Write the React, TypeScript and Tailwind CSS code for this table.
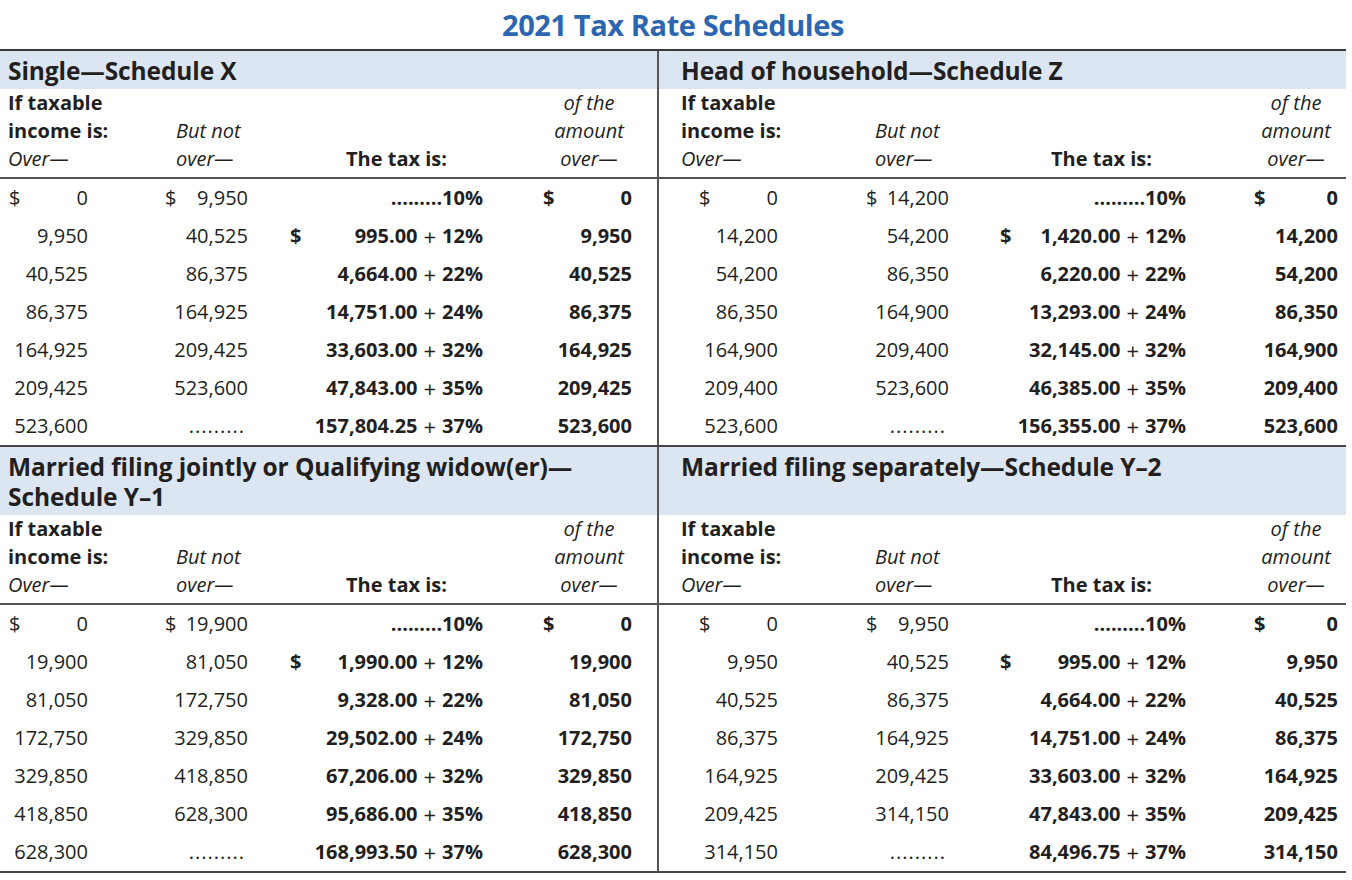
import { FC, ReactNode } from 'react';

type Row = {
  over: string;
  notOver: string | null;
  base: string | null;
  rate: string;
  amountOver: string;
};

type Schedule = {
  title: ReactNode;
  rows: Row[];
};

const mk = (data: [string, string | null, string | null, string, string][]): Row[] =>
  data.map(([over, notOver, base, rate, amountOver]) => ({ over, notOver, base, rate, amountOver }));

const single: Schedule = {
  title: 'Single—Schedule X',
  rows: mk([
    ['0', '9,950', null, '10%', '0'],
    ['9,950', '40,525', '995.00', '12%', '9,950'],
    ['40,525', '86,375', '4,664.00', '22%', '40,525'],
    ['86,375', '164,925', '14,751.00', '24%', '86,375'],
    ['164,925', '209,425', '33,603.00', '32%', '164,925'],
    ['209,425', '523,600', '47,843.00', '35%', '209,425'],
    ['523,600', null, '157,804.25', '37%', '523,600'],
  ]),
};

const headOfHousehold: Schedule = {
  title: 'Head of household—Schedule Z',
  rows: mk([
    ['0', '14,200', null, '10%', '0'],
    ['14,200', '54,200', '1,420.00', '12%', '14,200'],
    ['54,200', '86,350', '6,220.00', '22%', '54,200'],
    ['86,350', '164,900', '13,293.00', '24%', '86,350'],
    ['164,900', '209,400', '32,145.00', '32%', '164,900'],
    ['209,400', '523,600', '46,385.00', '35%', '209,400'],
    ['523,600', null, '156,355.00', '37%', '523,600'],
  ]),
};

const marriedJoint: Schedule = {
  title: (
    <>
      <div>Married filing jointly or Qualifying widow(er)—</div>
      <div>Schedule Y–1</div>
    </>
  ),
  rows: mk([
    ['0', '19,900', null, '10%', '0'],
    ['19,900', '81,050', '1,990.00', '12%', '19,900'],
    ['81,050', '172,750', '9,328.00', '22%', '81,050'],
    ['172,750', '329,850', '29,502.00', '24%', '172,750'],
    ['329,850', '418,850', '67,206.00', '32%', '329,850'],
    ['418,850', '628,300', '95,686.00', '35%', '418,850'],
    ['628,300', null, '168,993.50', '37%', '628,300'],
  ]),
};

const marriedSeparate: Schedule = {
  title: 'Married filing separately—Schedule Y–2',
  rows: mk([
    ['0', '9,950', null, '10%', '0'],
    ['9,950', '40,525', '995.00', '12%', '9,950'],
    ['40,525', '86,375', '4,664.00', '22%', '40,525'],
    ['86,375', '164,925', '14,751.00', '24%', '86,375'],
    ['164,925', '209,425', '33,603.00', '32%', '164,925'],
    ['209,425', '314,150', '47,843.00', '35%', '209,425'],
    ['314,150', null, '84,496.75', '37%', '314,150'],
  ]),
};

// column geometry, left panel vs right panel (literal classes)
const cols = {
  left: {
    c1: 'ml-[9px] w-[79px]',
    c2: 'ml-[77px] w-[83px]',
    c3: 'ml-[42px] w-[193px]',
    c4: 'ml-[60px] w-[89px]',
    hc1: 'ml-[8px] w-[157px]',
    hc2: 'w-[125px] pl-[11px]',
    hc3: 'w-[253px] pr-[96px]',
    hc4: 'w-[92px]',
    band: 'pl-[8px]',
  },
  right: {
    c1: 'ml-[40px] w-[79px]',
    c2: 'ml-[88px] w-[83px]',
    c3: 'ml-[51px] w-[186px]',
    c4: 'ml-[68px] w-[84px]',
    hc1: 'ml-[22px] w-[185px]',
    hc2: 'w-[134px] pl-[9px]',
    hc3: 'w-[254px] pr-[102px]',
    hc4: 'w-[84px]',
    band: 'pl-[22px]',
  },
};

type Side = keyof typeof cols;

const panelClass = (side: Side) =>
  side === 'left' ? 'w-[657px] shrink-0' : 'w-[689px] shrink-0 border-l-2 border-[#555]';

const Band: FC<{ side: Side; children: ReactNode }> = ({ side, children }) => (
  <div
    className={`${panelClass(side)} bg-[#dce6f2] pt-[5px] pb-[3px] text-[24.5px] font-bold leading-[30px] tracking-[-0.1px] ${cols[side].band}`}
  >
    {children}
  </div>
);

const ColumnHeader: FC<{ side: Side }> = ({ side }) => {
  const c = cols[side];
  return (
    <div className={`${panelClass(side)} flex pb-[4px] text-[20px] leading-[28px]`}>
      <div className={c.hc1}>
        <div className="font-bold">If taxable</div>
        <div className="font-bold">income is:</div>
        <div className="italic">Over—</div>
      </div>
      <div className={c.hc2}>
        <div>&nbsp;</div>
        <div className="italic">But not</div>
        <div className="italic">over—</div>
      </div>
      <div className={`${c.hc3} flex flex-col items-end justify-end`}>
        <div className="font-bold">The tax is:</div>
      </div>
      <div className={`${c.hc4} text-center italic`}>
        <div>of the</div>
        <div>amount</div>
        <div>over—</div>
      </div>
    </div>
  );
};

const DataRows: FC<{ side: Side; rows: Row[] }> = ({ side, rows }) => {
  const c = cols[side];
  return (
    <div className={panelClass(side)}>
      {rows.map((r, i) => (
        <div key={i} className="flex h-[38px] items-center text-[20px]">
          <div className={`${c.c1} flex justify-between`}>
            <span>{i === 0 ? '$' : ''}</span>
            <span>{r.over}</span>
          </div>
          <div className={`${c.c2} flex justify-between`}>
            <span>{i === 0 ? '$' : ''}</span>
            {r.notOver ? <span>{r.notOver}</span> : <span className="pr-[3px] tracking-[1px]">.........</span>}
          </div>
          <div className={`${c.c3} flex justify-between font-bold`}>
            <span>{i === 1 ? '$' : ''}</span>
            {r.base ? (
              <span className="flex items-center">
                {r.base}
                <span className="mx-[6px] text-[22px] font-normal leading-none">+</span>
                {r.rate}
              </span>
            ) : (
              <span>.........{r.rate}</span>
            )}
          </div>
          <div className={`${c.c4} flex justify-between font-bold`}>
            <span>{i === 0 ? '$' : ''}</span>
            <span>{r.amountOver}</span>
          </div>
        </div>
      ))}
    </div>
  );
};

const SchedulePair: FC<{ left: Schedule; right: Schedule }> = ({ left, right }) => (
  <div>
    <div className="flex">
      <Band side="left">{left.title}</Band>
      <Band side="right">{right.title}</Band>
    </div>
    <div className="flex border-b-2 border-[#555]">
      <ColumnHeader side="left" />
      <ColumnHeader side="right" />
    </div>
    <div className="flex border-b-2 border-[#444]">
      <DataRows side="left" rows={left.rows} />
      <DataRows side="right" rows={right.rows} />
    </div>
  </div>
);

const App: FC = () => {
  return (
    <div
      className="h-[880px] w-[1352px] bg-white text-[#231f20]"
      style={{ fontFamily: "'Open Sans', 'Noto Sans', sans-serif" }}
    >
      <div className="w-[1346px]">
        <h1 className="flex h-[49px] items-center justify-center text-[29px] font-bold tracking-[-0.4px] text-[#2c66b1]">
          2021 Tax Rate Schedules
        </h1>
        <div className="border-t-2 border-[#3a3a3a]">
          <SchedulePair left={single} right={headOfHousehold} />
          <SchedulePair left={marriedJoint} right={marriedSeparate} />
        </div>
      </div>
    </div>
  );
};

export default App;
